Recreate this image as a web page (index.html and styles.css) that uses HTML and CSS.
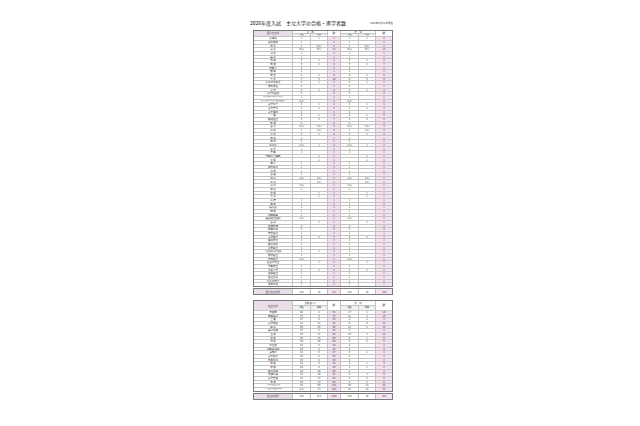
FILE: index.html
```html
<!DOCTYPE html>
<html lang="ja">
<head>
<meta charset="utf-8">
<title>2026年度入試 主な大学の合格・進学者数</title>
<link rel="stylesheet" href="styles.css">
</head>
<body>
<div class="page">
  <div class="title">
    <h1>2026年度入試　主な大学の合格・進学者数</h1>
    <span class="date">2026年3月31日現在</span>
  </div>

  <div class="tbl t1">
    <div class="g hd">
      <span class="hn">国公立大学</span>
      <span class="hg">合　格</span>
      <span class="hk hk1">計</span>
      <span class="hs">進　学</span>
      <span class="hk hk2">計</span>
      <span class="h2">現役</span><span class="h2">既卒</span><span class="h2">現役</span><span class="h2">既卒</span>
    </div>
    <div class="g bd">
<span>北海道</span><span>1</span><span>1</span><span>2</span><span>1</span><span>1</span><span>2</span>
<span>帯広畜産</span><span>1</span><span></span><span>1</span><span>1</span><span></span><span>1</span>
<span>岩 手</span><span>1</span><span>2(1)</span><span>3</span><span>1</span><span>2(1)</span><span>3</span>
<span>東 北</span><span>9(1)</span><span>5(1)</span><span>14</span><span>9(1)</span><span>5(1)</span><span>14</span>
<span>山 形</span><span>1</span><span></span><span>1</span><span>1</span><span></span><span>1</span>
<span>福 島</span><span>1</span><span></span><span>1</span><span>1</span><span></span><span>1</span>
<span>茨 城</span><span>3</span><span>1</span><span>4</span><span>3</span><span>1</span><span>4</span>
<span>筑 波</span><span>6</span><span>2</span><span>8</span><span>5</span><span>2</span><span>7</span>
<span>宇都宮</span><span>2</span><span></span><span>2</span><span>2</span><span></span><span>2</span>
<span>群 馬</span><span>1</span><span></span><span>1</span><span>1</span><span></span><span>1</span>
<span>埼 玉</span><span>6</span><span>2</span><span>8</span><span>6</span><span>2</span><span>8</span>
<span>千 葉</span><span>7</span><span>3</span><span>10</span><span>6</span><span>3</span><span>9</span>
<span>お茶の水女子</span><span>6</span><span>1</span><span>7</span><span>6</span><span>1</span><span>7</span>
<span>電気通信</span><span>2</span><span></span><span>2</span><span>2</span><span></span><span>2</span>
<span>東 京</span><span>3</span><span>1</span><span>4</span><span>3</span><span>1</span><span>4</span>
<span>東京外国語</span><span>4</span><span></span><span>4</span><span>4</span><span></span><span>4</span>
<span class="s">東京科学(旧東京工業)</span><span>1</span><span></span><span>1</span><span>1</span><span></span><span>1</span>
<span class="s">東京科学(旧東京医科歯科)</span><span>2(1)</span><span></span><span>2</span><span>2(1)</span><span></span><span>2</span>
<span>東京学芸</span><span>3</span><span>1</span><span>4</span><span>3</span><span>1</span><span>4</span>
<span>東京農工</span><span>2</span><span>1</span><span>3</span><span>2</span><span>1</span><span>3</span>
<span>東京海洋</span><span>1</span><span></span><span>1</span><span>1</span><span></span><span>1</span>
<span>一 橋</span><span>4</span><span>1</span><span>5</span><span>4</span><span>1</span><span>5</span>
<span>横浜国立</span><span>5</span><span>2</span><span>7</span><span>4</span><span>2</span><span>6</span>
<span>新 潟</span><span>2</span><span></span><span>2</span><span>2</span><span></span><span>2</span>
<span>金 沢</span><span>2(1)</span><span>1(1)</span><span>3</span><span>2(1)</span><span>1(1)</span><span>3</span>
<span>山 梨</span><span>1</span><span>1(1)</span><span>2</span><span>1</span><span>1(1)</span><span>2</span>
<span>信 州</span><span>3</span><span>1</span><span>4</span><span>3</span><span>1</span><span>4</span>
<span>岐 阜</span><span>1</span><span></span><span>1</span><span>1</span><span></span><span>1</span>
<span>静 岡</span><span>2</span><span></span><span>2</span><span>2</span><span></span><span>2</span>
<span>名古屋</span><span>1(1)</span><span>1</span><span>2</span><span>1(1)</span><span>1</span><span>2</span>
<span>三 重</span><span>1</span><span></span><span>1</span><span>1</span><span></span><span>1</span>
<span>京 都</span><span>1</span><span></span><span>1</span><span>1</span><span></span><span>1</span>
<span>京都工芸繊維</span><span></span><span>1</span><span>1</span><span></span><span>1</span><span>1</span>
<span>大 阪</span><span></span><span>1</span><span>1</span><span></span><span>1</span><span>1</span>
<span>神 戸</span><span>1</span><span></span><span>1</span><span>1</span><span></span><span>1</span>
<span>奈良女子</span><span>1</span><span></span><span>1</span><span>1</span><span></span><span>1</span>
<span>鳥 取</span><span>1</span><span></span><span>1</span><span>1</span><span></span><span>1</span>
<span>島 根</span><span>1</span><span></span><span>1</span><span>1</span><span></span><span>1</span>
<span>岡 山</span><span>1(1)</span><span>1(1)</span><span>2</span><span>1(1)</span><span>1(1)</span><span>2</span>
<span>広 島</span><span></span><span>1(1)</span><span>1</span><span></span><span>1(1)</span><span>1</span>
<span>山 口</span><span>1(1)</span><span></span><span>1</span><span>1(1)</span><span></span><span>1</span>
<span>徳 島</span><span>1</span><span></span><span>1</span><span>1</span><span></span><span>1</span>
<span>愛 媛</span><span></span><span>1</span><span>1</span><span></span><span>1</span><span>1</span>
<span>九 州</span><span></span><span>1</span><span>1</span><span></span><span>1</span><span>1</span>
<span>長 崎</span><span>1</span><span></span><span>1</span><span>1</span><span></span><span>1</span>
<span>熊 本</span><span>1</span><span></span><span>1</span><span>1</span><span></span><span>1</span>
<span>鹿児島</span><span>1</span><span></span><span>1</span><span>1</span><span></span><span>1</span>
<span>琉 球</span><span>1</span><span></span><span>1</span><span>1</span><span></span><span>1</span>
<span>国際教養</span><span>1</span><span></span><span>1</span><span>1</span><span></span><span>1</span>
<span>福島県立医科</span><span>1(1)</span><span></span><span>1</span><span>1(1)</span><span></span><span>1</span>
<span>会 津</span><span></span><span>1</span><span>1</span><span></span><span>1</span><span>1</span>
<span>高崎経済</span><span>2</span><span></span><span>2</span><span>2</span><span></span><span>2</span>
<span>前橋工科</span><span>3</span><span></span><span>3</span><span>3</span><span></span><span>3</span>
<span>埼玉県立</span><span>1</span><span></span><span>1</span><span>1</span><span></span><span>1</span>
<span>東京都立</span><span>5</span><span>2</span><span>7</span><span>5</span><span>2</span><span>7</span>
<span>横浜市立</span><span>2</span><span></span><span>2</span><span>2</span><span></span><span>2</span>
<span>都留文科</span><span>1</span><span></span><span>1</span><span>1</span><span></span><span>1</span>
<span>長野県立</span><span>1</span><span></span><span>1</span><span>1</span><span></span><span>1</span>
<span class="s">公立諏訪東京理科</span><span>1</span><span>1</span><span>2</span><span>1</span><span></span><span>1</span>
<span>静岡県立</span><span>1</span><span></span><span>1</span><span>1</span><span></span><span>1</span>
<span>愛知県立</span><span>1(1)</span><span></span><span>1</span><span>1(1)</span><span></span><span>1</span>
<span>名古屋市立</span><span></span><span>1</span><span>1</span><span></span><span>1</span><span>1</span>
<span>京都府立</span><span>1</span><span></span><span>1</span><span>1</span><span></span><span>1</span>
<span>大阪公立</span><span>2</span><span>1</span><span>3</span><span>2</span><span>1</span><span>3</span>
<span>兵庫県立</span><span>1</span><span></span><span>1</span><span>1</span><span></span><span>1</span>
<span>県立広島</span><span>1</span><span></span><span>1</span><span>1</span><span></span><span>1</span>
<span>北九州市立</span><span>1</span><span></span><span>1</span><span>1</span><span></span><span>1</span>
<span>高知工科</span><span>1</span><span></span><span>1</span><span>1</span><span></span><span>1</span>
    </div>
  </div>
  <div class="tbl tot">
    <div class="g tr">
      <span class="tn">国公立大学計</span><span>129</span><span>42</span><span class="tk">171</span><span>119</span><span>39</span><span class="tk">158</span>
    </div>
  </div>

  <div class="tbl t2">
    <div class="g hd hd2">
      <span class="hn">私立大学</span>
      <span class="hg">合格(延べ)</span>
      <span class="hk hk1">計</span>
      <span class="hs">進　学</span>
      <span class="hk hk2">計</span>
      <span class="h2">現役</span><span class="h2">既卒</span><span class="h2">現役</span><span class="h2">既卒</span>
    </div>
    <div class="g bd bd2">
<span>早稲田</span><span>48</span><span>4</span><span>52</span><span>17</span><span>1</span><span>18</span>
<span>慶應義塾</span><span>73</span><span>4</span><span>77</span><span>11</span><span>2</span><span>13</span>
<span>上 智</span><span>37</span><span>6</span><span>43</span><span>3</span><span>2</span><span>5</span>
<span>東京理科</span><span>21</span><span>21</span><span>42</span><span>8</span><span>4</span><span>12</span>
<span>明 治</span><span>65</span><span>25</span><span>90</span><span>12</span><span>1</span><span>13</span>
<span>青山学院</span><span>27</span><span>5</span><span>32</span><span>2</span><span></span><span>2</span>
<span>立 教</span><span>74</span><span>21</span><span>95</span><span>10</span><span>2</span><span>12</span>
<span>中 央</span><span>30</span><span>16</span><span>46</span><span>8</span><span>1</span><span>9</span>
<span>法 政</span><span>40</span><span>20</span><span>60</span><span>4</span><span>2</span><span>6</span>
<span>学習院</span><span>25</span><span>3</span><span>28</span><span>2</span><span></span><span>2</span>
<span>国際基督教</span><span>20</span><span>2</span><span>22</span><span>3</span><span></span><span>3</span>
<span>津田塾</span><span>22</span><span>5</span><span>27</span><span>3</span><span>1</span><span>4</span>
<span>東京女子</span><span>30</span><span>6</span><span>36</span><span>3</span><span></span><span>3</span>
<span>日本女子</span><span>25</span><span>4</span><span>29</span><span>2</span><span></span><span>2</span>
<span>成 蹊</span><span>18</span><span>6</span><span>24</span><span>2</span><span>1</span><span>3</span>
<span>成 城</span><span>20</span><span>8</span><span>28</span><span>1</span><span>1</span><span>2</span>
<span>明治学院</span><span>28</span><span>10</span><span>38</span><span>2</span><span></span><span>2</span>
<span>芝浦工業</span><span>24</span><span>18</span><span>42</span><span>4</span><span>2</span><span>6</span>
<span>東京農業</span><span>22</span><span>12</span><span>34</span><span>3</span><span>2</span><span>5</span>
<span>日 本</span><span>33</span><span>17</span><span>50</span><span>4</span><span>2</span><span>6</span>
<span class="s">その他私立大学</span><span>64</span><span>59</span><span>123</span><span>40</span><span>14</span><span>54</span>
<span class="s">(うち医学部医学科)</span><span>(11)</span><span>(7)</span><span>(18)</span><span>(3)</span><span>(2)</span><span>(5)</span>
    </div>
  </div>
  <div class="tbl tot">
    <div class="g tr">
      <span class="tn">私立大学計</span><span>746</span><span>272</span><span class="tk">1018</span><span>144</span><span>38</span><span class="tk">182</span>
    </div>
  </div>
</div>
</body>
</html>
```

FILE: styles.css
```css
html, body {
  margin: 0;
  padding: 0;
  background: #ffffff;
}

body {
  font-family: "Noto Sans CJK JP", "Noto Sans", sans-serif;
  color: #333333;
}

.page {
  width: 140px;
  margin-left: calc(50% - 67px);
  padding-top: 19.5px;
}

.title {
  display: flex;
  justify-content: space-between;
  align-items: flex-start;
  height: 10.2px;
  margin-left: -3px;
}

.title h1 {
  margin: 0;
  font-size: 5px;
  line-height: 6px;
  font-weight: normal;
  white-space: nowrap;
  color: #111111;
}

.date {
  font-size: 2.6px;
  line-height: 3px;
  margin-top: 2px;
  white-space: nowrap;
  color: #444444;
}

.tbl {
  display: flex;
  flex-direction: column;
  gap: 1px;
  border: 1px solid #7a7a7a;
  background: #c2c2c2;
}

.g {
  display: grid;
  grid-template-columns: 38px 17px 16px 12px 17px 16px 16px;
  gap: 1px;
}

.g > span {
  display: flex;
  align-items: center;
  justify-content: center;
  overflow: hidden;
  white-space: nowrap;
  background: #ffffff;
  font-size: 2.5px;
  line-height: 1;
}

.g > span.s {
  font-size: 2.1px;
}

/* header */
.hd {
  grid-template-rows: 2.3px 2.3px;
}

.hd2 {
  grid-template-rows: 3.8px 3.8px;
}

.hd > span {
  font-size: 2.4px;
}

.hd > .hn {
  grid-column: 1;
  grid-row: 1 / 3;
  background: #e9dde8;
}

.hd > .hg {
  grid-column: 2 / 4;
  grid-row: 1;
}

.hd > .hs {
  grid-column: 5 / 7;
  grid-row: 1;
}

.hd > .hk {
  grid-row: 1 / 3;
  font-size: 2.8px;
  font-weight: bold;
}

.hd > .hk1 {
  grid-column: 4;
}

.hd > .hk2 {
  grid-column: 7;
}

.hd > .h2 {
  grid-row: 2;
  background: #f1f1f1;
  font-size: 2px;
}

/* body rows */
.bd {
  grid-auto-rows: 2.68px;
}

.bd2 {
  grid-auto-rows: 2.66px;
}

.bd > span:nth-child(7n+4),
.bd > span:nth-child(7n) {
  background: #f6e2f2;
}

/* totals */
.tot {
  margin-top: 1.5px;
}

.tr {
  grid-template-rows: 5px;
}

.tr > span {
  font-size: 2.4px;
}

.tr > .tn {
  background: #e9dde8;
}

.tr > .tk {
  background: #f6e2f2;
}

.t2 {
  margin-top: 5px;
}
```
